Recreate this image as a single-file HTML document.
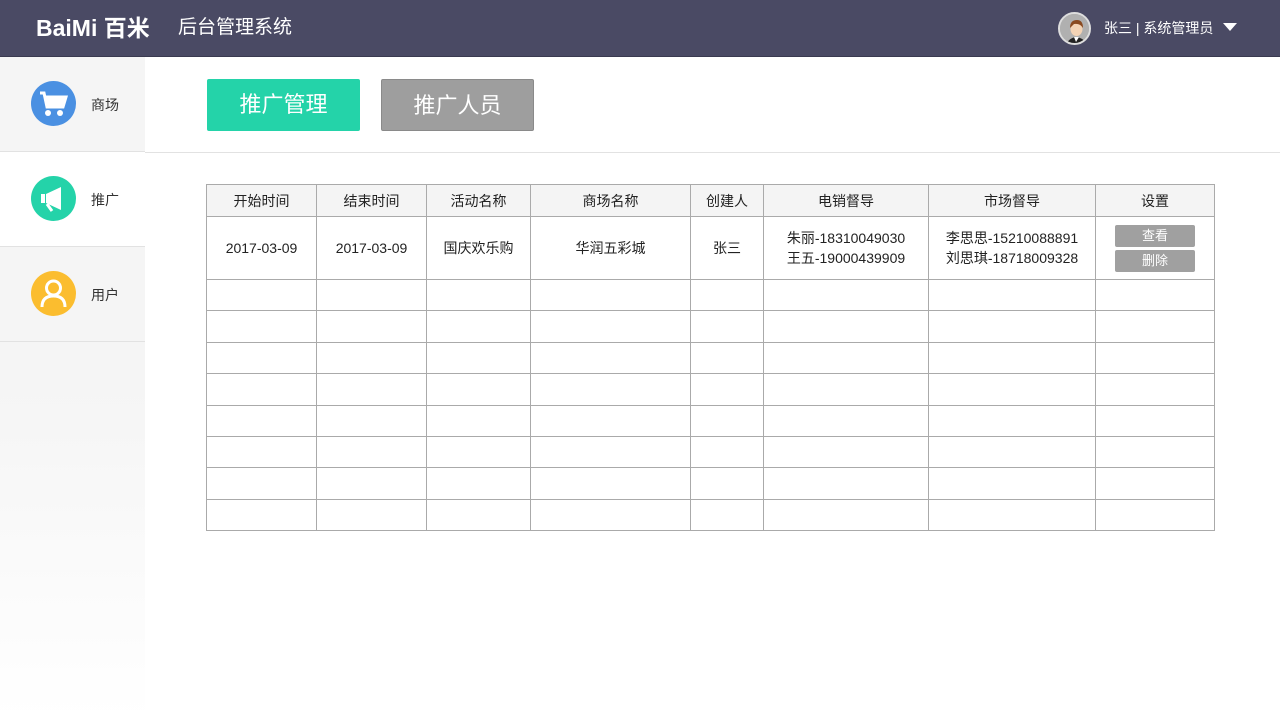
<!DOCTYPE html><html><head><meta charset="utf-8"><style>
*{margin:0;padding:0;box-sizing:border-box}
body{width:1280px;height:720px;background:#fff;font-family:"Liberation Sans","Noto Sans CJK SC",sans-serif;position:relative;overflow:hidden;color:#222}
.hd{position:absolute;left:0;top:0;width:1280px;height:57px;background:#4a4a64;border-bottom:1px solid #3a3a50}
.logo{position:absolute;left:36px;top:14px;color:#fff;font-size:23px;font-weight:bold;line-height:28px}
.title{position:absolute;left:178px;top:15px;color:#fff;font-size:19px;line-height:26px}
.user{position:absolute;left:1104px;top:18px;color:#fff;font-size:14px;line-height:20px}
.av{position:absolute;left:1058px;top:12px;width:33px;height:33px;border-radius:50%;background:#aaa;border:2px solid #ddd;overflow:hidden}
.side{position:absolute;left:0;top:57px;width:145px;height:663px;background:linear-gradient(#f5f5f5,#f5f5f5 50%,#fff)}
.it{position:absolute;left:0;width:145px;height:95px;border-bottom:1px solid #e2e2e2}
.it .c{position:absolute;left:31px;top:24px;width:45px;height:45px;border-radius:50%}
.it span{position:absolute;left:91px;top:38px;font-size:14px;color:#333}
.btn{position:absolute;top:79px;width:153px;height:52px;color:#fff;font-size:22px;text-align:center;line-height:52px;border-radius:2px}
table{position:absolute;left:206px;top:184px;border-collapse:collapse;font-size:14px}
td,th{border:1px solid #aaa;text-align:center;font-weight:normal;padding:0}
th{background:#f4f4f4;height:32px}
tr.e td{height:31.4px}
.sb{display:block;margin:3px auto;width:80px;height:22px;background:#a0a0a0;color:#fff;font-size:13px;line-height:22px;border-radius:2px}
</style></head><body>
<div class="hd">
<div class="logo">BaiMi 百米</div>
<div class="title">后台管理系统</div>
<div class="av"><svg width="33" height="33" viewBox="0 0 33 33"><rect width="33" height="33" fill="#b0b0b0"/><path d="M5 33 Q8 24 16 23 Q25 24 28 33Z" fill="#222"/><path d="M14 23 L16 28 L19 23Z" fill="#fff"/><ellipse cx="16.5" cy="15" rx="6" ry="7" fill="#f3d3b5"/><path d="M10 14 Q10 6 17 6 Q23 6 23 14 Q20 9 14 10 Z" fill="#8a4a20"/></svg></div>
<div class="user">张三 | 系统管理员 <span style="display:inline-block;width:0;height:0;border-left:7px solid transparent;border-right:7px solid transparent;border-top:8px solid #fff;margin-left:6px;vertical-align:2px"></span></div>
</div>
<div class="side">
<div class="it" style="top:0"><div class="c" style="background:#4a90e2"><svg width="45" height="45" viewBox="0 0 45 45"><path d="M9 12 L13 12 L16 26 L32 26 L35 16 L14 16" fill="none" stroke="#fff" stroke-width="3"/><path d="M15 17 L34 17 L31 25 L16 25Z" fill="#fff"/><circle cx="17" cy="32" r="3" fill="#fff"/><circle cx="29" cy="32" r="3" fill="#fff"/></svg></div><span>商场</span></div>
<div class="it" style="top:95px;background:#fff"><div class="c" style="background:#24d3a9"><svg width="45" height="45" viewBox="0 0 45 45"><rect x="10" y="18" width="4" height="9" fill="#fff"/><path d="M15 18 L30 11 L30 34 L15 27Z" fill="#fff"/><path d="M16 28 L21 35" stroke="#fff" stroke-width="3"/></svg></div><span>推广</span></div>
<div class="it" style="top:190px"><div class="c" style="background:#fbbd2f"><svg width="45" height="45" viewBox="0 0 45 45"><circle cx="22.5" cy="17" r="7" fill="none" stroke="#fff" stroke-width="3"/><path d="M11 36 Q11 25 22.5 25 Q34 25 34 36" fill="none" stroke="#fff" stroke-width="3"/></svg></div><span>用户</span></div>
</div>
<div class="btn" style="left:207px;background:#24d3a9">推广管理</div>
<div class="btn" style="left:381px;background:#9e9e9e;border:1px solid #8a8a8a">推广人员</div>
<div style="position:absolute;left:145px;top:152px;width:1135px;height:1px;background:#e2e2e2"></div>
<table>
<tr><th style="width:110px">开始时间</th><th style="width:110px">结束时间</th><th style="width:104px">活动名称</th><th style="width:160px">商场名称</th><th style="width:73px">创建人</th><th style="width:165px">电销督导</th><th style="width:167px">市场督导</th><th style="width:119px">设置</th></tr>
<tr><td style="height:63px">2017-03-09</td><td>2017-03-09</td><td>国庆欢乐购</td><td>华润五彩城</td><td>张三</td><td>朱丽-18310049030<br>王五-19000439909</td><td>李思思-15210088891<br>刘思琪-18718009328</td><td><span class="sb">查看</span><span class="sb">删除</span></td></tr>
<tr class="e"><td></td><td></td><td></td><td></td><td></td><td></td><td></td><td></td></tr>
<tr class="e"><td></td><td></td><td></td><td></td><td></td><td></td><td></td><td></td></tr>
<tr class="e"><td></td><td></td><td></td><td></td><td></td><td></td><td></td><td></td></tr>
<tr class="e"><td></td><td></td><td></td><td></td><td></td><td></td><td></td><td></td></tr>
<tr class="e"><td></td><td></td><td></td><td></td><td></td><td></td><td></td><td></td></tr>
<tr class="e"><td></td><td></td><td></td><td></td><td></td><td></td><td></td><td></td></tr>
<tr class="e"><td></td><td></td><td></td><td></td><td></td><td></td><td></td><td></td></tr>
<tr class="e"><td></td><td></td><td></td><td></td><td></td><td></td><td></td><td></td></tr>
</table>
</body></html>
